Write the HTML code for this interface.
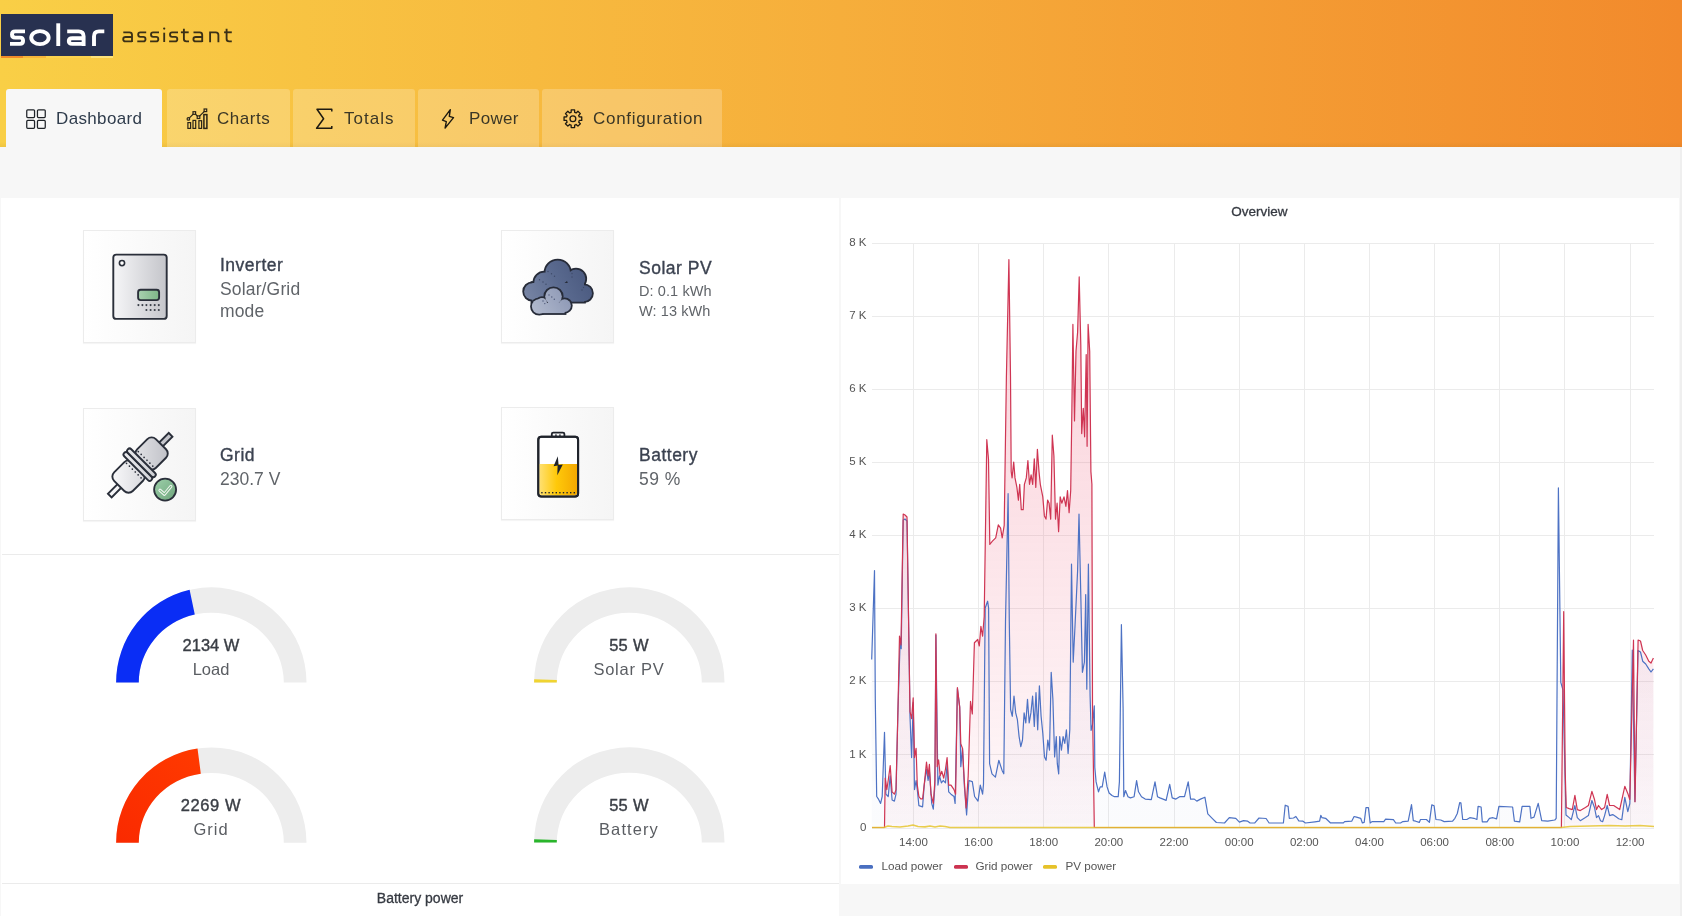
<!DOCTYPE html>
<html><head><meta charset="utf-8">
<style>
*{margin:0;padding:0;box-sizing:border-box}
html,body{width:1682px;height:916px;overflow:hidden;background:#f7f7f7;font-family:"Liberation Sans",sans-serif}
.ct,.cs,.cs2,.gv,.gl,.tab .t,.aa{will-change:transform}
.abs{position:absolute}
#hdr{position:absolute;left:0;top:0;width:1682px;height:147px;background:linear-gradient(to right,#f9cf46 0%,#f6ae3b 50%,#f28a2c 100%)}
#logo{position:absolute;left:1px;top:14px;width:112px;height:42px;background:#283150}
#logo span{position:absolute;left:7px;top:4px;font-weight:bold;font-size:31px;color:#fff;transform:scaleX(1.33);transform-origin:0 0;line-height:36px}
#stripe{position:absolute;left:1px;top:56px;width:112px;height:2px}
#asst{position:absolute;left:121px;top:23px;font-size:22px;letter-spacing:2.9px;color:#3d3524;line-height:26px}
.tab{position:absolute;top:89px;height:58px;background:rgba(255,255,255,0.22);border-radius:3px 3px 0 0}
.tab.act{background:#f7f7f7}
.tab .t{position:absolute;top:20px;font-size:17px;line-height:20px;color:#3b3726}
.tab.act .t{color:#2f3c4c}
.tab svg{position:absolute;top:19px}
.panel{position:absolute;background:#fff}
.card{position:absolute;width:112px;height:112px;border:1px solid #ececec;background:linear-gradient(to right,#ffffff,#f5f5f5);box-shadow:0 1px 1px rgba(0,0,0,0.04)}
.ct{position:absolute;font-weight:normal;-webkit-text-stroke:0.35px #3b4250;letter-spacing:0.5px;font-size:17.5px;color:#3b4250;line-height:20px;white-space:nowrap}
.cs{position:absolute;font-size:17.5px;color:#606469;line-height:22px;white-space:nowrap}
.cs2{position:absolute;font-size:14.5px;color:#606469;line-height:20px;white-space:nowrap}
.gv{position:absolute;font-weight:normal;-webkit-text-stroke:0.4px #3a3e45;font-size:16.5px;color:#3a3e45;line-height:20px;text-align:center;width:200px;white-space:nowrap}
.gl{position:absolute;font-size:16.5px;color:#5a5d62;line-height:20px;text-align:center;width:200px;white-space:nowrap}
</style></head><body>
<div id="hdr">
  <div id="logo"></div>
  <svg class="abs" style="left:0;top:0" width="120" height="60" fill="none" stroke="#fff" stroke-width="3.9">
   <path d="M25,31.4 H15.2 Q12,31.4 12,34.5 Q12,37.6 15.2,37.6 H20 Q23.1,37.6 23.1,40.8 Q23.1,43.9 20,43.9 H10"/>
   <ellipse cx="39.95" cy="37.65" rx="8.7" ry="6.5"/>
   <path d="M58.25,23.3 V46"/>
   <path d="M67.2,31.4 H78.5 Q83.6,31.4 83.6,36.3 V46"/>
   <path d="M83.6,38.3 H72.3 Q68.8,38.3 68.8,41.1 Q68.8,43.9 72.3,43.9 H83.6"/>
   <path d="M94,46 V36.5 Q94,31.4 99,31.4 H104.3"/>
  </svg>
  <div id="stripe" style="background:linear-gradient(to right,#f08a2a 0,#f08a2a 22px,#f6b53a 22px,#f6b53a 45px,#fbd24e 45px,#fbd24e 90px,#fde27a 90px)"></div>
  <svg class="abs" style="left:0;top:0" width="240" height="60" fill="none" stroke="#3b3016" stroke-width="1.85"><path d="M123.3,32.3 H129.5 Q132.0,32.3 132.0,34.8 V42"/><path d="M132.0,37 H125.6 Q123.2,37 123.2,39.2 Q123.2,41.4 125.6,41.4 H132.0"/><path d="M146.2,32.3 H140.3 Q138.2,32.3 138.2,34.6 Q138.2,36.9 140.3,36.9 H143.3 Q145.5,36.9 145.5,39.2 Q145.5,41.4 143.3,41.4 H137.3"/><path d="M159.0,32.3 H153.1 Q151.0,32.3 151.0,34.6 Q151.0,36.9 153.1,36.9 H156.1 Q158.3,36.9 158.3,39.2 Q158.3,41.4 156.1,41.4 H150.1"/><path d="M164.2,32.7 V42"/><path d="M178.0,32.3 H172.1 Q170.0,32.3 170.0,34.6 Q170.0,36.9 172.1,36.9 H175.1 Q177.3,36.9 177.3,39.2 Q177.3,41.4 175.1,41.4 H169.1"/><path d="M183.9,28.8 V39 Q183.9,41.4 186.4,41.4 H189"/><path d="M180.9,32.3 H188.7"/><path d="M193.5,32.3 H199.7 Q202.2,32.3 202.2,34.8 V42"/><path d="M202.2,37 H195.8 Q193.4,37 193.4,39.2 Q193.4,41.4 195.8,41.4 H202.2"/><path d="M210.1,42.3 V32.3 H215.8 Q218.4,32.3 218.4,34.9 V42.3"/><path d="M226.6,28.8 V39 Q226.6,41.4 229.1,41.4 H231.8"/><path d="M224.1,32.3 H231.8"/><circle cx="164.2" cy="28.6" r="1.15" fill="#3b3016" stroke="none"/></svg>
</div>

<div class="abs" style="left:0;top:142px;width:1682px;height:5px;background:linear-gradient(to bottom,rgba(120,80,0,0) 0%,rgba(120,80,0,0.08) 100%)"></div>
<!-- tabs -->
<div class="tab act" style="left:6px;width:156px">
  <svg style="left:20px;top:19.6px" width="20" height="20" viewBox="0 0 20 20" fill="none" stroke="#1f2328" stroke-width="1.25"><rect x="0.75" y="0.75" width="7.8" height="7.8" rx="1"/><rect x="11.45" y="0.75" width="7.8" height="7.8" rx="1"/><rect x="0.75" y="11.45" width="7.8" height="7.8" rx="1"/><rect x="11.45" y="11.45" width="7.8" height="7.8" rx="1"/></svg>
  <div class="t" style="left:50px;letter-spacing:0.35px">Dashboard</div>
</div>
<div class="tab" style="left:167px;width:123px">
  <svg style="left:0;top:0" width="60" height="58" fill="none" stroke="#2a2416" stroke-width="1.2"><rect x="20.9" y="33.6" width="2.7" height="5.8"/><rect x="26" y="31.4" width="2.7" height="8"/><rect x="31.9" y="31.7" width="2.7" height="7.7"/><rect x="36.9" y="25.6" width="3" height="13.8" stroke-width="1.5"/><polyline points="21.4,29.9 27.3,24 31.5,28.2 38.4,21.3"/><circle cx="21.4" cy="29.9" r="1.3" fill="#f7d27a"/><rect x="26" y="22.7" width="2.6" height="2.6" fill="#f7d27a"/><rect x="30.2" y="26.9" width="2.6" height="2.6" fill="#f7d27a"/><rect x="37.1" y="20" width="2.6" height="2.6" fill="#f7d27a"/></svg>
  <div class="t" style="left:50px;letter-spacing:0.55px">Charts</div>
</div>
<div class="tab" style="left:293px;width:122px">
  <svg style="left:0;top:0" width="60" height="58" fill="none" stroke="#1e1a10" stroke-width="1.5" stroke-linejoin="round"><polyline points="38.8,22.6 38.8,20.2 24,20.2 30.6,29.7 23.6,39.3 38.8,39.3 38.8,36.9"/></svg>
  <div class="t" style="left:51px;letter-spacing:1px">Totals</div>
</div>
<div class="tab" style="left:418px;width:121px">
  <svg style="left:0;top:0" width="60" height="58" fill="none" stroke="#1e1a10" stroke-width="1.4" stroke-linejoin="round"><polygon points="32.3,20.7 24.5,31.2 28.3,32.6 27.1,39.1 35.5,28.6 31.3,27.4"/></svg>
  <div class="t" style="left:51px;letter-spacing:0.3px">Power</div>
</div>
<div class="tab" style="left:542px;width:180px">
  <svg style="left:0;top:0" width="60" height="58" fill="none" stroke="#1e1a10" stroke-width="1.3" stroke-linejoin="round"><path d="M28.37,23.60 L29.14,23.34 L29.20,20.86 L32.60,20.86 L32.66,23.34 L33.43,23.60 L34.15,23.96 L35.95,22.25 L38.35,24.65 L36.64,26.45 L37.00,27.17 L37.26,27.94 L39.74,28.00 L39.74,31.40 L37.26,31.46 L37.00,32.23 L36.64,32.95 L38.35,34.75 L35.95,37.15 L34.15,35.44 L33.43,35.80 L32.66,36.06 L32.60,38.54 L29.20,38.54 L29.14,36.06 L28.37,35.80 L27.65,35.44 L25.85,37.15 L23.45,34.75 L25.16,32.95 L24.80,32.23 L24.54,31.46 L22.06,31.40 L22.06,28.00 L24.54,27.94 L24.80,27.17 L25.16,26.45 L23.45,24.65 L25.85,22.25 L27.65,23.96Z"/><circle cx="30.9" cy="29.7" r="2.9"/></svg>
  <div class="t" style="left:51px;letter-spacing:0.7px">Configuration</div>
</div>

<!-- left panel -->
<div class="panel" style="left:1px;top:198px;width:838px;height:718px"></div>
<div class="abs" style="left:2px;top:554px;width:837px;height:1px;background:#ebebeb"></div>
<div class="abs" style="left:2px;top:883px;width:837px;height:1px;background:#ebebeb"></div>


<!-- cards -->
<div class="card" style="left:83px;top:230px;width:113px;height:113px"></div>
<div class="card" style="left:501px;top:230px;width:113px;height:113px"></div>
<div class="card" style="left:83px;top:408px;width:113px;height:113px"></div>
<div class="card" style="left:501px;top:407px;width:113px;height:113px"></div>

<!-- inverter icon -->
<svg class="abs" style="left:0;top:0" width="840" height="560">
 <defs>
  <linearGradient id="gInv" x1="0" x2="1" y1="0" y2="0"><stop offset="0" stop-color="#f6f6f8"/><stop offset="1" stop-color="#c4c5ca"/></linearGradient>
  <linearGradient id="gScr" x1="0" x2="1"><stop offset="0" stop-color="#a9d1b0"/><stop offset="1" stop-color="#7db587"/></linearGradient>
  <linearGradient id="gCloudB" gradientUnits="userSpaceOnUse" x1="523" y1="300" x2="593" y2="265"><stop offset="0" stop-color="#7a87a6"/><stop offset="0.5" stop-color="#5a6a8f"/><stop offset="1" stop-color="#46557b"/></linearGradient>
  <linearGradient id="gCloudS" gradientUnits="userSpaceOnUse" x1="531" y1="313" x2="571" y2="290"><stop offset="0" stop-color="#b4bccf"/><stop offset="1" stop-color="#8a95b3"/></linearGradient>
  <linearGradient id="gPlug" gradientUnits="userSpaceOnUse" x1="115" y1="465" x2="165" y2="465"><stop offset="0" stop-color="#f4f4f6"/><stop offset="1" stop-color="#c7c8cd"/></linearGradient>
  <linearGradient id="gChk" x1="0" x2="1" y1="0" y2="1"><stop offset="0" stop-color="#9dd0aa"/><stop offset="1" stop-color="#6ea57c"/></linearGradient>
  <linearGradient id="gBat" gradientUnits="userSpaceOnUse" x1="538" y1="480" x2="579" y2="480"><stop offset="0" stop-color="#ffe27a"/><stop offset="0.45" stop-color="#ffc90a"/><stop offset="1" stop-color="#f2a500"/></linearGradient>
 </defs>
 <g stroke="#2a2f3a" stroke-width="1.9">
  <rect x="113.3" y="254.6" width="53.4" height="64.3" rx="3" fill="url(#gInv)"/>
  <circle cx="122" cy="263.1" r="2.6" fill="#fff" stroke-width="1.6"/>
  <rect x="138.1" y="289.8" width="21" height="10.3" rx="2.5" fill="url(#gScr)"/>
 </g>
 <g fill="#3a3f48">
  <circle cx="138.4" cy="305.1" r="1.05"/><circle cx="142.4" cy="305.1" r="1.05"/><circle cx="146.4" cy="305.1" r="1.05"/><circle cx="150.6" cy="305.1" r="1.05"/><circle cx="154.7" cy="305.1" r="1.05"/><circle cx="158.8" cy="305.1" r="1.05"/>
  <circle cx="146.4" cy="310" r="1.05"/><circle cx="150.6" cy="310" r="1.05"/><circle cx="154.7" cy="310" r="1.05"/><circle cx="158.8" cy="310" r="1.05"/>
 </g>

 <!-- cloud big -->
 <g stroke="#262b38" stroke-width="3.6">
  <circle cx="532.4" cy="291.5" r="8.3"/><circle cx="544.3" cy="282.5" r="10"/><circle cx="557.7" cy="272.8" r="12.3"/><circle cx="576" cy="278.8" r="9.3"/><circle cx="584" cy="293.2" r="8"/><rect x="532.4" y="283" width="51.6" height="18.7"/>
 </g>
 <g fill="url(#gCloudB)">
  <circle cx="532.4" cy="291.5" r="8.3"/><circle cx="544.3" cy="282.5" r="10"/><circle cx="557.7" cy="272.8" r="12.3"/><circle cx="576" cy="278.8" r="9.3"/><circle cx="584" cy="293.2" r="8"/><rect x="532.4" y="283" width="51.6" height="18.7"/>
 </g>
 <g fill="#3e4a68"><circle cx="548" cy="271.5" r="0.7"/><circle cx="551.5" cy="273.8" r="0.7"/><circle cx="554.5" cy="276.2" r="0.7"/><circle cx="539.5" cy="279.8" r="0.7"/><circle cx="543" cy="282" r="0.7"/><circle cx="546" cy="284.3" r="0.7"/><circle cx="572" cy="273.5" r="0.7"/><circle cx="572" cy="277" r="0.7"/><circle cx="583.5" cy="287.5" r="0.7"/><circle cx="582" cy="290" r="0.7"/></g>
 <!-- cloud small -->
 <g stroke="#262b38" stroke-width="3.6">
  <circle cx="539.2" cy="306.5" r="7.3"/><circle cx="553.5" cy="296.5" r="8.3"/><circle cx="564.6" cy="305.6" r="6.3"/><rect x="539.2" y="303" width="25.4" height="10.1"/><circle cx="542" cy="303" r="5"/>
 </g>
 <g fill="url(#gCloudS)">
  <circle cx="539.2" cy="306.5" r="7.3"/><circle cx="553.5" cy="296.5" r="8.3"/><circle cx="564.6" cy="305.6" r="6.3"/><rect x="539.2" y="303" width="25.4" height="10.1"/><circle cx="542" cy="303" r="5"/>
 </g>
 <g fill="#4d5878"><circle cx="549" cy="295" r="0.7"/><circle cx="551.8" cy="297" r="0.7"/><circle cx="554.3" cy="299.2" r="0.7"/><circle cx="543" cy="301" r="0.7"/><circle cx="544.8" cy="303.6" r="0.7"/></g>

 <!-- plug -->
 <g transform="translate(140.2,465.2) rotate(-45)">
  <defs><linearGradient id="gPlug2" gradientUnits="userSpaceOnUse" x1="-18" y1="-18" x2="18" y2="18"><stop offset="0" stop-color="#f6f6f8"/><stop offset="1" stop-color="#c3c4ca"/></linearGradient></defs>
  <g stroke="#2a2f3a" stroke-width="1.9" fill="url(#gPlug2)">
   <rect x="-43" y="-2.6" width="86" height="5.2"/>
   <rect x="3" y="-13.4" width="26.5" height="26.4" rx="6"/>
   <rect x="-29.5" y="-13.4" width="26.5" height="26.4" rx="6"/>
   <rect x="-5" y="-20" width="5" height="38.4" rx="2.4"/>
   <rect x="0" y="-20" width="5" height="38.4" rx="2.4"/>
  </g>
  <g fill="#2a2f3a"><circle cx="8.3" cy="-11.0" r="0.85"/><circle cx="8.3" cy="-6.9" r="0.85"/><circle cx="8.3" cy="-2.8" r="0.85"/><circle cx="8.3" cy="1.3" r="0.85"/><circle cx="8.3" cy="5.4" r="0.85"/><circle cx="8.3" cy="9.5" r="0.85"/><circle cx="-8.3" cy="-11.0" r="0.85"/><circle cx="-8.3" cy="-6.9" r="0.85"/><circle cx="-8.3" cy="-2.8" r="0.85"/><circle cx="-8.3" cy="1.3" r="0.85"/><circle cx="-8.3" cy="5.4" r="0.85"/><circle cx="-8.3" cy="9.5" r="0.85"/></g>
 </g>
 <circle cx="165.1" cy="489.6" r="11" fill="url(#gChk)" stroke="#2a2f3a" stroke-width="1.8"/>
 <polyline points="160,490.3 164.4,494.2 170.8,486.4" fill="none" stroke="#eef5ef" stroke-width="3.2" stroke-linejoin="round" stroke-linecap="round"/>
 <polyline points="160,490.3 164.4,494.2 170.8,486.4" fill="none" stroke="#7cb889" stroke-width="1.1" stroke-linejoin="round" stroke-linecap="round"/>

 <!-- battery -->
 <rect x="551.8" y="432.6" width="12.6" height="6" rx="1.5" fill="#fff" stroke="#1f232b" stroke-width="1.8"/>
 <rect x="538.3" y="436.8" width="39.8" height="59.8" rx="3" fill="#fff" stroke="#1f232b" stroke-width="2"/>
 <path d="M539.3,464 H577.1 V492.6 Q577.1,495.6 574.1,495.6 H542.3 Q539.3,495.6 539.3,492.6Z" fill="url(#gBat)"/>
 <rect x="538.3" y="436.8" width="39.8" height="59.8" rx="3" fill="none" stroke="#1f232b" stroke-width="2"/>
 <g fill="#1f232b"><rect x="555.2" y="434.4" width="1.5" height="1.5"/><rect x="559.2" y="434.4" width="1.5" height="1.5"/>
  <rect x="541.2" y="492" width="1.4" height="1.4"/><rect x="544.8" y="492" width="1.4" height="1.4"/><rect x="548.4" y="492" width="1.4" height="1.4"/><rect x="552" y="492" width="1.4" height="1.4"/><rect x="555.6" y="492" width="1.4" height="1.4"/><rect x="559.2" y="492" width="1.4" height="1.4"/><rect x="562.8" y="492" width="1.4" height="1.4"/><rect x="566.4" y="492" width="1.4" height="1.4"/><rect x="570" y="492" width="1.4" height="1.4"/><rect x="573.6" y="492" width="1.4" height="1.4"/></g>
 <polygon points="557.8,456.2 553.6,466.3 557.6,465.6 557.3,475.2 562.8,464.4 558.6,465" fill="#1f232b"/>
</svg>

<div class="ct" style="left:220px;top:254.7px">Inverter</div>
<div class="cs" style="left:220px;top:278.3px;letter-spacing:0.15px">Solar/Grid</div>
<div class="cs" style="left:220px;top:299.7px;letter-spacing:0.15px">mode</div>
<div class="ct" style="left:639px;top:257.7px">Solar PV</div>
<div class="cs2" style="left:639px;top:281px;letter-spacing:0.1px">D: 0.1 kWh</div>
<div class="cs2" style="left:639px;top:301px;letter-spacing:0.1px">W: 13 kWh</div>
<div class="ct" style="left:220px;top:444.5px">Grid</div>
<div class="cs" style="left:220px;top:469.2px;line-height:20px;letter-spacing:0px">230.7 V</div>
<div class="ct" style="left:639px;top:444.5px">Battery</div>
<div class="cs" style="left:639px;top:469.2px;line-height:20px;letter-spacing:0.5px">59 %</div>

<svg class="abs" style="left:0;top:0" width="840" height="880"><defs><linearGradient id="gRed" gradientUnits="userSpaceOnUse" x1="116" y1="840" x2="200" y2="750"><stop offset="0" stop-color="#fa2a00"/><stop offset="1" stop-color="#ff3a00"/></linearGradient></defs>
<path d="M116.10,682.50 A95.20,95.20 0 0 1 306.50,682.50 L283.80,682.50 A72.50,69.80 0 0 0 138.80,682.50 Z" fill="#ededed"/>
<path d="M116.10,682.50 A95.20,95.20 0 0 1 189.60,589.81 L194.77,614.54 A72.50,69.80 0 0 0 138.80,682.50 Z" fill="#0a2df5"/>
<path d="M534.10,682.50 A95.20,95.20 0 0 1 724.50,682.50 L701.80,682.50 A72.50,69.80 0 0 0 556.80,682.50 Z" fill="#ededed"/>
<path d="M534.10,682.50 A95.20,95.20 0 0 1 534.16,679.21 L556.84,680.09 A72.50,69.80 0 0 0 556.80,682.50 Z" fill="#f0d431"/>
<path d="M116.10,842.70 A95.20,95.20 0 0 1 306.50,842.70 L283.80,842.70 A72.50,69.80 0 0 0 138.80,842.70 Z" fill="#ededed"/>
<path d="M116.10,842.70 A95.20,95.20 0 0 1 197.53,748.50 L200.81,773.63 A72.50,69.80 0 0 0 138.80,842.70 Z" fill="url(#gRed)"/>
<path d="M534.10,842.50 A95.20,95.20 0 0 1 724.50,842.50 L701.80,842.50 A72.50,69.80 0 0 0 556.80,842.50 Z" fill="#ededed"/>
<path d="M534.10,842.50 A95.20,95.20 0 0 1 534.16,839.21 L556.84,840.09 A72.50,69.80 0 0 0 556.80,842.50 Z" fill="#29b52b"/>
</svg>
<div class="gv" style="left:110.5px;top:635.3px">2134 W</div>
<div class="gl" style="left:110.5px;top:659.1px">Load</div>
<div class="gv" style="left:529px;top:635.3px;letter-spacing:0.3px">55 W</div>
<div class="gl" style="left:529px;top:659.3px;letter-spacing:0.75px">Solar PV</div>
<div class="gv" style="left:110.5px;top:795.3px;letter-spacing:0.6px">2269 W</div>
<div class="gl" style="left:110.5px;top:819.3px;letter-spacing:1px">Grid</div>
<div class="gv" style="left:529px;top:794.8px;letter-spacing:0.3px">55 W</div>
<div class="gl" style="left:529px;top:819.3px;letter-spacing:1.1px">Battery</div>
<div class="abs aa" style="left:0;top:887.5px;width:840px;text-align:center;font-size:14px;color:#363a42;-webkit-text-stroke:0.3px #363a42;line-height:20px">Battery power</div>

<div class="abs" style="left:1680px;top:147px;width:2px;height:769px;background:#efefef"></div>
<!-- right panel -->
<div class="panel" style="left:841px;top:198px;width:838px;height:686px"></div>

<!-- CHART START -->
<svg class="abs aa" style="left:0;top:0" width="1682" height="916">
<defs><linearGradient id="fR" gradientUnits="userSpaceOnUse" x1="0" y1="243" x2="0" y2="828"><stop offset="0" stop-color="#ee5a78" stop-opacity="0.30"/><stop offset="1" stop-color="#ee5a78" stop-opacity="0.04"/></linearGradient>
<linearGradient id="fB" gradientUnits="userSpaceOnUse" x1="0" y1="243" x2="0" y2="828"><stop offset="0" stop-color="#5a74c8" stop-opacity="0.08"/><stop offset="1" stop-color="#5a74c8" stop-opacity="0.025"/></linearGradient></defs>
<g stroke="#ebebeb" stroke-width="1"><line x1="872" y1="828.5" x2="1654" y2="828.5"/><line x1="872" y1="754.5" x2="1654" y2="754.5"/><line x1="872" y1="681.5" x2="1654" y2="681.5"/><line x1="872" y1="608.5" x2="1654" y2="608.5"/><line x1="872" y1="535.5" x2="1654" y2="535.5"/><line x1="872" y1="462.5" x2="1654" y2="462.5"/><line x1="872" y1="389.5" x2="1654" y2="389.5"/><line x1="872" y1="316.5" x2="1654" y2="316.5"/><line x1="872" y1="243.5" x2="1654" y2="243.5"/><line x1="913.5" y1="243" x2="913.5" y2="828"/><line x1="978.5" y1="243" x2="978.5" y2="828"/><line x1="1043.5" y1="243" x2="1043.5" y2="828"/><line x1="1108.5" y1="243" x2="1108.5" y2="828"/><line x1="1174.5" y1="243" x2="1174.5" y2="828"/><line x1="1239.5" y1="243" x2="1239.5" y2="828"/><line x1="1304.5" y1="243" x2="1304.5" y2="828"/><line x1="1369.5" y1="243" x2="1369.5" y2="828"/><line x1="1434.5" y1="243" x2="1434.5" y2="828"/><line x1="1499.5" y1="243" x2="1499.5" y2="828"/><line x1="1564.5" y1="243" x2="1564.5" y2="828"/><line x1="1630.5" y1="243" x2="1630.5" y2="828"/></g>
<path d="M871.7,827.5 L871.7,659.6 L874.5,570.5 L875.3,700.0 L876.7,796.5 L878.3,798.8 L880.6,803.4 L882.2,796.5 L884.5,732.3 L885.9,794.2 L888.2,796.5 L890.2,775.9 L892.1,800.0 L894.4,801.1 L896.0,794.2 L897.8,716.3 L900.1,641.8 L901.2,648.7 L903.2,520.0 L905.0,519.0 L907.0,521.0 L909.2,660.0 L910.0,716.3 L911.6,757.6 L913.2,702.5 L914.5,789.6 L916.1,780.5 L917.3,789.6 L918.9,805.7 L922.6,806.8 L924.2,785.1 L926.5,769.0 L928.1,780.5 L929.4,771.3 L931.7,803.4 L933.3,809.1 L934.9,785.1 L935.9,635.0 L937.9,785.1 L939.5,775.9 L941.4,782.8 L943.2,780.5 L945.5,782.8 L947.1,764.4 L948.7,791.9 L951.0,794.2 L954.0,796.5 L955.1,803.4 L957.4,688.8 L959.7,707.1 L960.8,766.7 L962.5,748.4 L964.3,785.1 L966.6,814.9 L968.9,780.5 L972.3,781.6 L974.6,796.5 L978.0,801.1 L980.3,785.1 L982.6,794.2 L983.5,784.0 L985.2,608.0 L987.6,601.2 L988.6,608.0 L989.6,763.7 L992.0,773.8 L995.4,777.2 L998.8,760.3 L1002.1,770.4 L1003.8,773.8 L1005.5,621.5 L1008.1,493.7 L1009.3,621.5 L1010.6,709.5 L1012.3,716.3 L1014.0,696.0 L1015.7,712.9 L1017.4,719.7 L1019.1,736.6 L1020.8,746.7 L1022.5,740.0 L1024.1,712.9 L1025.8,723.0 L1027.5,699.4 L1029.2,723.0 L1030.9,712.9 L1032.6,696.0 L1034.3,726.4 L1036.0,692.6 L1037.7,729.8 L1039.4,685.8 L1041.1,716.3 L1042.8,733.2 L1044.5,756.9 L1046.1,760.3 L1047.8,740.0 L1049.5,750.1 L1051.2,672.3 L1052.9,699.4 L1054.6,756.9 L1056.3,736.6 L1057.3,763.7 L1058.7,773.8 L1059.7,736.6 L1061.4,750.1 L1063.1,736.6 L1064.8,743.4 L1066.4,729.8 L1068.1,753.5 L1069.8,729.8 L1071.5,564.0 L1073.2,662.1 L1074.9,628.3 L1077.6,570.8 L1079.0,514.0 L1081.0,604.6 L1082.4,672.3 L1084.4,662.1 L1085.7,594.5 L1086.8,689.2 L1088.4,564.0 L1090.1,696.0 L1091.1,730.4 L1092.4,725.5 L1094.3,705.8 L1094.8,767.2 L1096.1,781.9 L1098.5,791.8 L1100.2,786.9 L1102.2,786.9 L1104.7,772.1 L1107.1,786.9 L1109.1,793.0 L1112.0,795.5 L1114.5,796.7 L1118.2,796.7 L1119.4,781.9 L1121.4,624.7 L1123.1,708.3 L1123.8,796.7 L1125.5,790.5 L1128.0,796.7 L1130.4,797.9 L1134.1,796.7 L1136.6,780.7 L1138.5,791.8 L1141.5,796.7 L1145.2,799.1 L1151.3,799.6 L1155.0,781.9 L1157.5,796.7 L1159.9,797.9 L1163.1,799.1 L1166.1,800.4 L1169.7,784.4 L1172.2,797.9 L1175.9,799.1 L1179.6,796.7 L1184.5,796.7 L1188.2,781.9 L1190.6,799.1 L1194.3,799.1 L1196.8,801.1 L1200.5,799.1 L1204.9,797.2 L1207.8,813.9 L1212.7,818.8 L1216.4,822.5 L1224.5,823.0 L1229.3,817.7 L1235.8,818.3 L1239.4,822.1 L1243.5,820.6 L1247.7,821.2 L1250.1,823.0 L1254.8,822.8 L1259.0,818.0 L1266.1,818.5 L1269.1,823.0 L1283.4,823.0 L1285.2,805.2 L1288.1,806.4 L1289.3,818.3 L1293.5,818.0 L1295.9,816.5 L1298.8,820.9 L1303.0,821.2 L1305.4,823.0 L1314.9,821.8 L1319.6,821.2 L1320.8,815.3 L1322.0,817.7 L1325.6,818.3 L1330.3,822.8 L1343.4,822.8 L1344.6,821.6 L1351.7,821.2 L1354.1,816.5 L1356.5,817.1 L1360.7,818.3 L1362.4,823.0 L1364.2,822.4 L1366.0,807.6 L1368.4,807.6 L1370.2,823.0 L1372.0,821.6 L1383.8,821.6 L1385.6,819.2 L1393.4,819.7 L1395.7,823.0 L1400.5,823.0 L1402.9,821.6 L1408.2,821.2 L1411.5,804.6 L1413.3,820.6 L1415.7,821.2 L1419.3,822.4 L1420.5,819.5 L1426.4,819.5 L1429.4,822.4 L1431.8,804.9 L1434.1,805.8 L1435.9,819.5 L1440.7,820.0 L1444.2,821.6 L1452.6,821.2 L1454.9,818.3 L1457.3,813.5 L1459.7,802.6 L1460.9,802.8 L1462.7,819.5 L1466.8,819.5 L1469.8,817.7 L1474.0,818.3 L1476.9,819.5 L1478.1,806.4 L1481.1,807.0 L1482.3,821.8 L1487.0,821.8 L1489.4,818.3 L1493.0,817.7 L1496.6,818.9 L1498.9,806.4 L1512.6,807.0 L1514.4,821.2 L1519.7,821.8 L1522.1,806.4 L1529.9,806.4 L1531.0,818.3 L1534.0,817.1 L1538.2,803.4 L1541.7,820.6 L1547.7,821.2 L1554.8,820.0 L1556.2,818.3 L1558.4,487.9 L1560.8,682.3 L1563.0,690.0 L1566.0,815.0 L1569.2,817.6 L1571.3,819.7 L1574.9,805.5 L1577.3,817.6 L1580.3,820.7 L1585.4,817.6 L1588.4,815.6 L1591.9,800.5 L1594.5,807.5 L1596.5,817.6 L1598.5,815.6 L1600.5,820.7 L1602.6,821.7 L1604.6,815.6 L1607.2,805.5 L1609.6,815.6 L1612.7,814.6 L1615.7,816.6 L1618.7,818.7 L1621.8,819.7 L1624.8,797.4 L1627.8,811.6 L1629.8,803.5 L1632.3,650.0 L1634.9,801.5 L1638.0,650.5 L1640.5,652.0 L1642.7,661.2 L1645.7,664.0 L1648.8,668.8 L1651.0,672.0 L1653.4,668.8 L1653.4,827.5 Z" fill="url(#fB)"/>
<path d="M872.0,827.5 L872.0,827.5 L884.5,827.5 L885.2,778.2 L886.8,789.6 L888.2,780.5 L890.2,765.6 L892.1,791.9 L894.4,794.2 L896.0,789.6 L897.8,716.3 L899.5,636.0 L901.0,645.0 L903.2,514.0 L905.0,515.0 L907.0,517.0 L909.2,660.0 L910.0,711.7 L911.6,718.6 L913.2,697.9 L914.5,757.6 L916.1,748.4 L917.3,785.1 L918.9,796.5 L920.7,798.8 L922.6,798.8 L924.2,785.1 L926.5,762.1 L928.1,775.9 L929.4,764.4 L931.0,794.2 L933.3,803.4 L934.9,780.5 L935.9,633.8 L937.2,766.7 L938.6,759.8 L940.2,775.9 L941.8,771.3 L943.7,778.2 L945.5,769.0 L947.1,757.6 L948.7,785.1 L951.0,785.1 L954.0,789.6 L955.6,794.2 L957.4,687.6 L959.7,707.1 L960.8,743.8 L962.5,748.4 L964.3,780.5 L966.1,808.0 L968.2,775.9 L970.5,701.4 L972.3,714.0 L974.4,642.7 L977.7,639.5 L979.3,646.0 L980.9,626.4 L982.6,636.2 L984.2,616.5 L986.8,439.7 L988.5,459.3 L989.8,544.5 L992.4,541.2 L995.7,537.9 L998.3,524.8 L1000.6,528.1 L1002.2,537.9 L1004.2,525.4 L1006.4,376.6 L1008.9,259.5 L1010.5,376.6 L1011.2,471.6 L1012.1,477.9 L1013.7,462.1 L1015.0,477.9 L1016.9,487.4 L1018.4,500.1 L1019.7,484.3 L1021.3,509.6 L1023.2,509.6 L1024.4,484.3 L1026.3,477.9 L1027.9,460.5 L1029.5,484.3 L1031.1,474.8 L1032.7,484.3 L1034.3,458.9 L1035.8,487.4 L1037.4,449.4 L1039.0,471.6 L1040.3,484.3 L1042.8,496.9 L1044.4,515.9 L1046.0,519.1 L1047.6,500.1 L1049.1,503.2 L1050.7,519.1 L1052.3,435.2 L1053.9,455.8 L1055.5,519.1 L1057.1,503.2 L1058.6,531.7 L1060.2,496.9 L1061.8,503.2 L1064.0,496.9 L1065.9,506.4 L1067.5,490.6 L1069.1,512.7 L1070.7,490.6 L1071.9,408.3 L1072.9,324.4 L1074.5,420.9 L1076.0,351.3 L1077.6,332.3 L1079.2,276.9 L1080.8,345.0 L1081.7,433.6 L1083.3,408.3 L1084.6,436.8 L1086.2,354.5 L1087.1,446.3 L1088.1,324.4 L1089.7,351.3 L1090.9,471.6 L1091.9,484.3 L1092.5,706.0 L1094.3,827.5 L1561.4,827.5 L1563.7,611.7 L1565.2,771.2 L1566.2,807.5 L1569.2,808.6 L1572.3,809.6 L1574.9,795.4 L1577.3,809.6 L1580.3,810.6 L1585.4,807.5 L1588.4,805.5 L1591.9,791.4 L1594.5,799.5 L1596.5,809.6 L1598.5,805.5 L1601.6,809.6 L1604.6,807.5 L1607.2,794.4 L1609.6,805.5 L1613.7,805.5 L1616.7,807.5 L1619.7,809.6 L1624.8,786.3 L1627.8,793.4 L1629.8,799.5 L1633.5,640.0 L1635.0,801.8 L1638.1,640.0 L1640.5,641.0 L1642.7,650.5 L1645.7,655.0 L1648.8,661.2 L1651.0,663.0 L1653.4,658.0 L1653.4,827.5 Z" fill="url(#fR)"/>
<polyline points="871.7,659.6 874.5,570.5 875.3,700.0 876.7,796.5 878.3,798.8 880.6,803.4 882.2,796.5 884.5,732.3 885.9,794.2 888.2,796.5 890.2,775.9 892.1,800.0 894.4,801.1 896.0,794.2 897.8,716.3 900.1,641.8 901.2,648.7 903.2,520.0 905.0,519.0 907.0,521.0 909.2,660.0 910.0,716.3 911.6,757.6 913.2,702.5 914.5,789.6 916.1,780.5 917.3,789.6 918.9,805.7 922.6,806.8 924.2,785.1 926.5,769.0 928.1,780.5 929.4,771.3 931.7,803.4 933.3,809.1 934.9,785.1 935.9,635.0 937.9,785.1 939.5,775.9 941.4,782.8 943.2,780.5 945.5,782.8 947.1,764.4 948.7,791.9 951.0,794.2 954.0,796.5 955.1,803.4 957.4,688.8 959.7,707.1 960.8,766.7 962.5,748.4 964.3,785.1 966.6,814.9 968.9,780.5 972.3,781.6 974.6,796.5 978.0,801.1 980.3,785.1 982.6,794.2 983.5,784.0 985.2,608.0 987.6,601.2 988.6,608.0 989.6,763.7 992.0,773.8 995.4,777.2 998.8,760.3 1002.1,770.4 1003.8,773.8 1005.5,621.5 1008.1,493.7 1009.3,621.5 1010.6,709.5 1012.3,716.3 1014.0,696.0 1015.7,712.9 1017.4,719.7 1019.1,736.6 1020.8,746.7 1022.5,740.0 1024.1,712.9 1025.8,723.0 1027.5,699.4 1029.2,723.0 1030.9,712.9 1032.6,696.0 1034.3,726.4 1036.0,692.6 1037.7,729.8 1039.4,685.8 1041.1,716.3 1042.8,733.2 1044.5,756.9 1046.1,760.3 1047.8,740.0 1049.5,750.1 1051.2,672.3 1052.9,699.4 1054.6,756.9 1056.3,736.6 1057.3,763.7 1058.7,773.8 1059.7,736.6 1061.4,750.1 1063.1,736.6 1064.8,743.4 1066.4,729.8 1068.1,753.5 1069.8,729.8 1071.5,564.0 1073.2,662.1 1074.9,628.3 1077.6,570.8 1079.0,514.0 1081.0,604.6 1082.4,672.3 1084.4,662.1 1085.7,594.5 1086.8,689.2 1088.4,564.0 1090.1,696.0 1091.1,730.4 1092.4,725.5 1094.3,705.8 1094.8,767.2 1096.1,781.9 1098.5,791.8 1100.2,786.9 1102.2,786.9 1104.7,772.1 1107.1,786.9 1109.1,793.0 1112.0,795.5 1114.5,796.7 1118.2,796.7 1119.4,781.9 1121.4,624.7 1123.1,708.3 1123.8,796.7 1125.5,790.5 1128.0,796.7 1130.4,797.9 1134.1,796.7 1136.6,780.7 1138.5,791.8 1141.5,796.7 1145.2,799.1 1151.3,799.6 1155.0,781.9 1157.5,796.7 1159.9,797.9 1163.1,799.1 1166.1,800.4 1169.7,784.4 1172.2,797.9 1175.9,799.1 1179.6,796.7 1184.5,796.7 1188.2,781.9 1190.6,799.1 1194.3,799.1 1196.8,801.1 1200.5,799.1 1204.9,797.2 1207.8,813.9 1212.7,818.8 1216.4,822.5 1224.5,823.0 1229.3,817.7 1235.8,818.3 1239.4,822.1 1243.5,820.6 1247.7,821.2 1250.1,823.0 1254.8,822.8 1259.0,818.0 1266.1,818.5 1269.1,823.0 1283.4,823.0 1285.2,805.2 1288.1,806.4 1289.3,818.3 1293.5,818.0 1295.9,816.5 1298.8,820.9 1303.0,821.2 1305.4,823.0 1314.9,821.8 1319.6,821.2 1320.8,815.3 1322.0,817.7 1325.6,818.3 1330.3,822.8 1343.4,822.8 1344.6,821.6 1351.7,821.2 1354.1,816.5 1356.5,817.1 1360.7,818.3 1362.4,823.0 1364.2,822.4 1366.0,807.6 1368.4,807.6 1370.2,823.0 1372.0,821.6 1383.8,821.6 1385.6,819.2 1393.4,819.7 1395.7,823.0 1400.5,823.0 1402.9,821.6 1408.2,821.2 1411.5,804.6 1413.3,820.6 1415.7,821.2 1419.3,822.4 1420.5,819.5 1426.4,819.5 1429.4,822.4 1431.8,804.9 1434.1,805.8 1435.9,819.5 1440.7,820.0 1444.2,821.6 1452.6,821.2 1454.9,818.3 1457.3,813.5 1459.7,802.6 1460.9,802.8 1462.7,819.5 1466.8,819.5 1469.8,817.7 1474.0,818.3 1476.9,819.5 1478.1,806.4 1481.1,807.0 1482.3,821.8 1487.0,821.8 1489.4,818.3 1493.0,817.7 1496.6,818.9 1498.9,806.4 1512.6,807.0 1514.4,821.2 1519.7,821.8 1522.1,806.4 1529.9,806.4 1531.0,818.3 1534.0,817.1 1538.2,803.4 1541.7,820.6 1547.7,821.2 1554.8,820.0 1556.2,818.3 1558.4,487.9 1560.8,682.3 1563.0,690.0 1566.0,815.0 1569.2,817.6 1571.3,819.7 1574.9,805.5 1577.3,817.6 1580.3,820.7 1585.4,817.6 1588.4,815.6 1591.9,800.5 1594.5,807.5 1596.5,817.6 1598.5,815.6 1600.5,820.7 1602.6,821.7 1604.6,815.6 1607.2,805.5 1609.6,815.6 1612.7,814.6 1615.7,816.6 1618.7,818.7 1621.8,819.7 1624.8,797.4 1627.8,811.6 1629.8,803.5 1632.3,650.0 1634.9,801.5 1638.0,650.5 1640.5,652.0 1642.7,661.2 1645.7,664.0 1648.8,668.8 1651.0,672.0 1653.4,668.8" fill="none" stroke="#4d72c4" stroke-width="1.2" stroke-linejoin="round"/>
<polyline points="872.0,827.5 884.5,827.5 885.2,778.2 886.8,789.6 888.2,780.5 890.2,765.6 892.1,791.9 894.4,794.2 896.0,789.6 897.8,716.3 899.5,636.0 901.0,645.0 903.2,514.0 905.0,515.0 907.0,517.0 909.2,660.0 910.0,711.7 911.6,718.6 913.2,697.9 914.5,757.6 916.1,748.4 917.3,785.1 918.9,796.5 920.7,798.8 922.6,798.8 924.2,785.1 926.5,762.1 928.1,775.9 929.4,764.4 931.0,794.2 933.3,803.4 934.9,780.5 935.9,633.8 937.2,766.7 938.6,759.8 940.2,775.9 941.8,771.3 943.7,778.2 945.5,769.0 947.1,757.6 948.7,785.1 951.0,785.1 954.0,789.6 955.6,794.2 957.4,687.6 959.7,707.1 960.8,743.8 962.5,748.4 964.3,780.5 966.1,808.0 968.2,775.9 970.5,701.4 972.3,714.0 974.4,642.7 977.7,639.5 979.3,646.0 980.9,626.4 982.6,636.2 984.2,616.5 986.8,439.7 988.5,459.3 989.8,544.5 992.4,541.2 995.7,537.9 998.3,524.8 1000.6,528.1 1002.2,537.9 1004.2,525.4 1006.4,376.6 1008.9,259.5 1010.5,376.6 1011.2,471.6 1012.1,477.9 1013.7,462.1 1015.0,477.9 1016.9,487.4 1018.4,500.1 1019.7,484.3 1021.3,509.6 1023.2,509.6 1024.4,484.3 1026.3,477.9 1027.9,460.5 1029.5,484.3 1031.1,474.8 1032.7,484.3 1034.3,458.9 1035.8,487.4 1037.4,449.4 1039.0,471.6 1040.3,484.3 1042.8,496.9 1044.4,515.9 1046.0,519.1 1047.6,500.1 1049.1,503.2 1050.7,519.1 1052.3,435.2 1053.9,455.8 1055.5,519.1 1057.1,503.2 1058.6,531.7 1060.2,496.9 1061.8,503.2 1064.0,496.9 1065.9,506.4 1067.5,490.6 1069.1,512.7 1070.7,490.6 1071.9,408.3 1072.9,324.4 1074.5,420.9 1076.0,351.3 1077.6,332.3 1079.2,276.9 1080.8,345.0 1081.7,433.6 1083.3,408.3 1084.6,436.8 1086.2,354.5 1087.1,446.3 1088.1,324.4 1089.7,351.3 1090.9,471.6 1091.9,484.3 1092.5,706.0 1094.3,827.5 1561.4,827.5 1563.7,611.7 1565.2,771.2 1566.2,807.5 1569.2,808.6 1572.3,809.6 1574.9,795.4 1577.3,809.6 1580.3,810.6 1585.4,807.5 1588.4,805.5 1591.9,791.4 1594.5,799.5 1596.5,809.6 1598.5,805.5 1601.6,809.6 1604.6,807.5 1607.2,794.4 1609.6,805.5 1613.7,805.5 1616.7,807.5 1619.7,809.6 1624.8,786.3 1627.8,793.4 1629.8,799.5 1633.5,640.0 1635.0,801.8 1638.1,640.0 1640.5,641.0 1642.7,650.5 1645.7,655.0 1648.8,661.2 1651.0,663.0 1653.4,658.0" fill="none" stroke="#cf3553" stroke-width="1.2" stroke-linejoin="round"/>
<polyline points="872.0,827.5 884.0,827.5 888.0,826.0 892.0,826.5 900.0,827.0 908.0,826.0 913.0,825.0 918.0,826.5 925.0,826.8 930.0,826.0 935.0,827.0 940.0,826.0 945.0,826.5 950.0,827.5 1561.0,827.5 1570.0,826.5 1590.0,826.0 1610.0,825.5 1625.0,826.0 1640.0,825.5 1654.0,826.5" fill="none" stroke="#e6c630" stroke-width="1.7" stroke-opacity="0.85" stroke-linejoin="round"/>
<g font-family="Liberation Sans, sans-serif" font-size="11.5" fill="#555"><text x="866.5" y="830.5" text-anchor="end">0</text><text x="866.5" y="757.5" text-anchor="end">1 K</text><text x="866.5" y="684.4" text-anchor="end">2 K</text><text x="866.5" y="611.4" text-anchor="end">3 K</text><text x="866.5" y="538.4" text-anchor="end">4 K</text><text x="866.5" y="465.4" text-anchor="end">5 K</text><text x="866.5" y="392.3" text-anchor="end">6 K</text><text x="866.5" y="319.3" text-anchor="end">7 K</text><text x="866.5" y="246.3" text-anchor="end">8 K</text><text x="913.4" y="845.7" text-anchor="middle">14:00</text><text x="978.5" y="845.7" text-anchor="middle">16:00</text><text x="1043.7" y="845.7" text-anchor="middle">18:00</text><text x="1108.8" y="845.7" text-anchor="middle">20:00</text><text x="1174.0" y="845.7" text-anchor="middle">22:00</text><text x="1239.2" y="845.7" text-anchor="middle">00:00</text><text x="1304.3" y="845.7" text-anchor="middle">02:00</text><text x="1369.5" y="845.7" text-anchor="middle">04:00</text><text x="1434.6" y="845.7" text-anchor="middle">06:00</text><text x="1499.8" y="845.7" text-anchor="middle">08:00</text><text x="1564.9" y="845.7" text-anchor="middle">10:00</text><text x="1630.1" y="845.7" text-anchor="middle">12:00</text></g>
<rect x="859" y="865" width="14" height="3.8" rx="1.5" fill="#4a6fc0"/><rect x="954" y="865" width="14" height="3.8" rx="1.5" fill="#cc3350"/><rect x="1043" y="865" width="14" height="3.8" rx="1.5" fill="#e6c22a"/>
<g font-family="Liberation Sans, sans-serif" font-size="11.7" fill="#555"><text x="881.5" y="869.5">Load power</text><text x="975.5" y="869.5">Grid power</text><text x="1065.5" y="869.5">PV power</text></g>
<text x="1259.5" y="215.8" text-anchor="middle" font-family="Liberation Sans, sans-serif" font-size="13.5" fill="#363a42" stroke="#363a42" stroke-width="0.3">Overview</text>
</svg>
<!-- CHART END -->
</body></html>
